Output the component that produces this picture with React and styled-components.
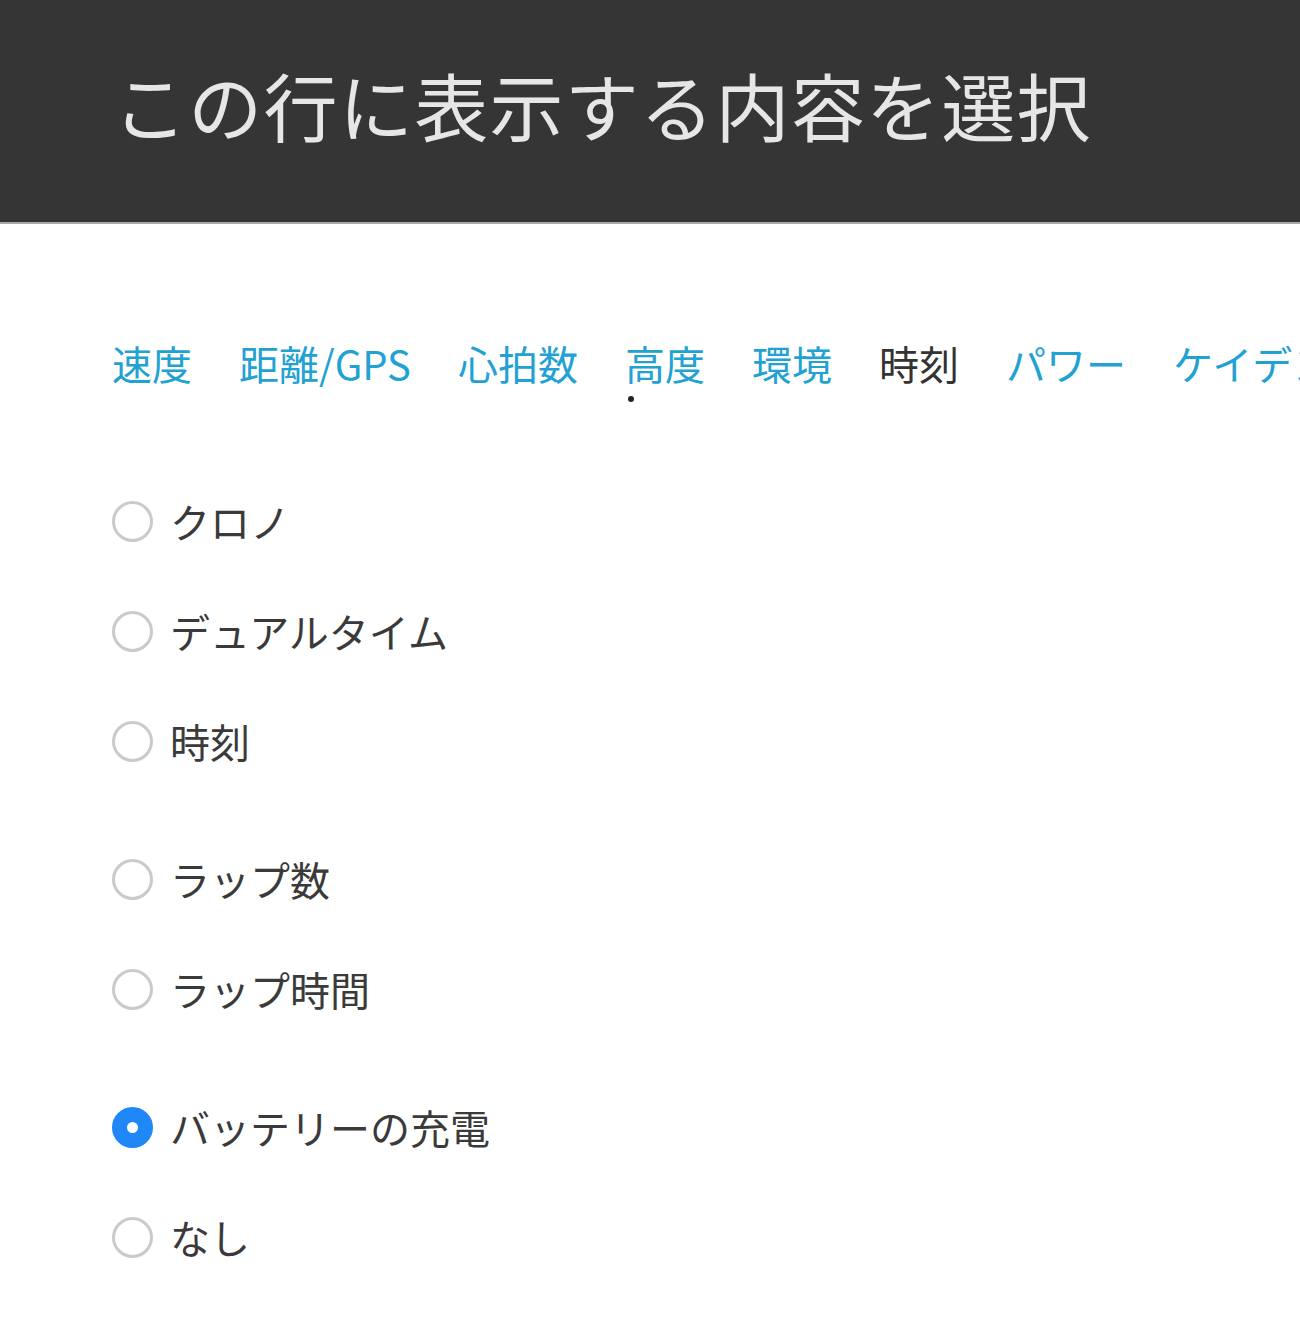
import React, { useState } from 'react'
import styled, { createGlobalStyle } from 'styled-components'

const GlobalStyle = createGlobalStyle`
    body {
        margin: 0;
        background: #fff;
        font-family: "Noto Sans CJK JP", "Noto Sans", sans-serif;
    }
`

const tabs = ['速度', '距離/GPS', '心拍数', '高度', '環境', '時刻', 'パワー', 'ケイデンス']

const groups = [
    ['クロノ', 'デュアルタイム', '時刻'],
    ['ラップ数', 'ラップ時間'],
    ['バッテリーの充電', 'なし'],
]

function App() {
    const [activeTab, setActiveTab] = useState('時刻')
    const [selected, setSelected] = useState('バッテリーの充電')

    return (
        <Page>
            <GlobalStyle />
            <Header>
                <Title>この行に表示する内容を選択</Title>
            </Header>
            <TabBar>
                {tabs.map((tab) => (
                    <Tab key={tab} active={tab === activeTab} onClick={() => setActiveTab(tab)}>
                        {tab}
                        {tab === '高度' && <Marker />}
                    </Tab>
                ))}
            </TabBar>
            <OptionList>
                {groups.map((group, i) => (
                    <Group key={i}>
                        {group.map((label) => (
                            <Option key={label} onClick={() => setSelected(label)}>
                                <Radio checked={label === selected} />
                                <Label>{label}</Label>
                            </Option>
                        ))}
                    </Group>
                ))}
            </OptionList>
        </Page>
    )
}

export default App

const Page = styled.div`
    width: 1300px;
    min-height: 1335px;
    overflow: hidden;
`
const Header = styled.header`
    height: 224px;
    background-color: #353535;
    border-bottom: 2px solid #a9a9a9;
    display: flex;
    align-items: center;
    padding-left: 113px;
    padding-bottom: 14px;
    box-sizing: border-box;
`
const Title = styled.h1`
    margin: 0;
    font-size: 74px;
    font-weight: 400;
    line-height: 1;
    color: #e6e6e6;
    letter-spacing: 1.3px;
`
const TabBar = styled.nav`
    display: flex;
    gap: 47px;
    margin-top: 114px;
    padding-left: 112px;
    white-space: nowrap;
`
const Tab = styled.span`
    position: relative;
    font-size: 40px;
    line-height: 50px;
    color: ${props => props.active ? '#333' : '#22a1d3'};
    cursor: pointer;
    flex-shrink: 0;
`
const Marker = styled.span`
    position: absolute;
    left: 3px;
    top: 58px;
    width: 6px;
    height: 6px;
    border-radius: 50%;
    background: #222;
`
const OptionList = styled.div`
    margin-top: 78px;
    padding-left: 112px;
    display: flex;
    flex-direction: column;
    gap: 28px;
`
const Group = styled.div`
    display: flex;
    flex-direction: column;
`
const Option = styled.label`
    height: 110px;
    display: flex;
    align-items: center;
    gap: 17px;
    cursor: pointer;
`
const Radio = styled.span`
    box-sizing: border-box;
    width: 41px;
    height: 41px;
    border-radius: 50%;
    flex-shrink: 0;
    border: ${props => props.checked ? '15px solid #1f87f7' : '3px solid #cacaca'};
    background: #fff;
`
const Label = styled.span`
    font-size: 40px;
    line-height: 1;
    color: #3a3a3a;
`
